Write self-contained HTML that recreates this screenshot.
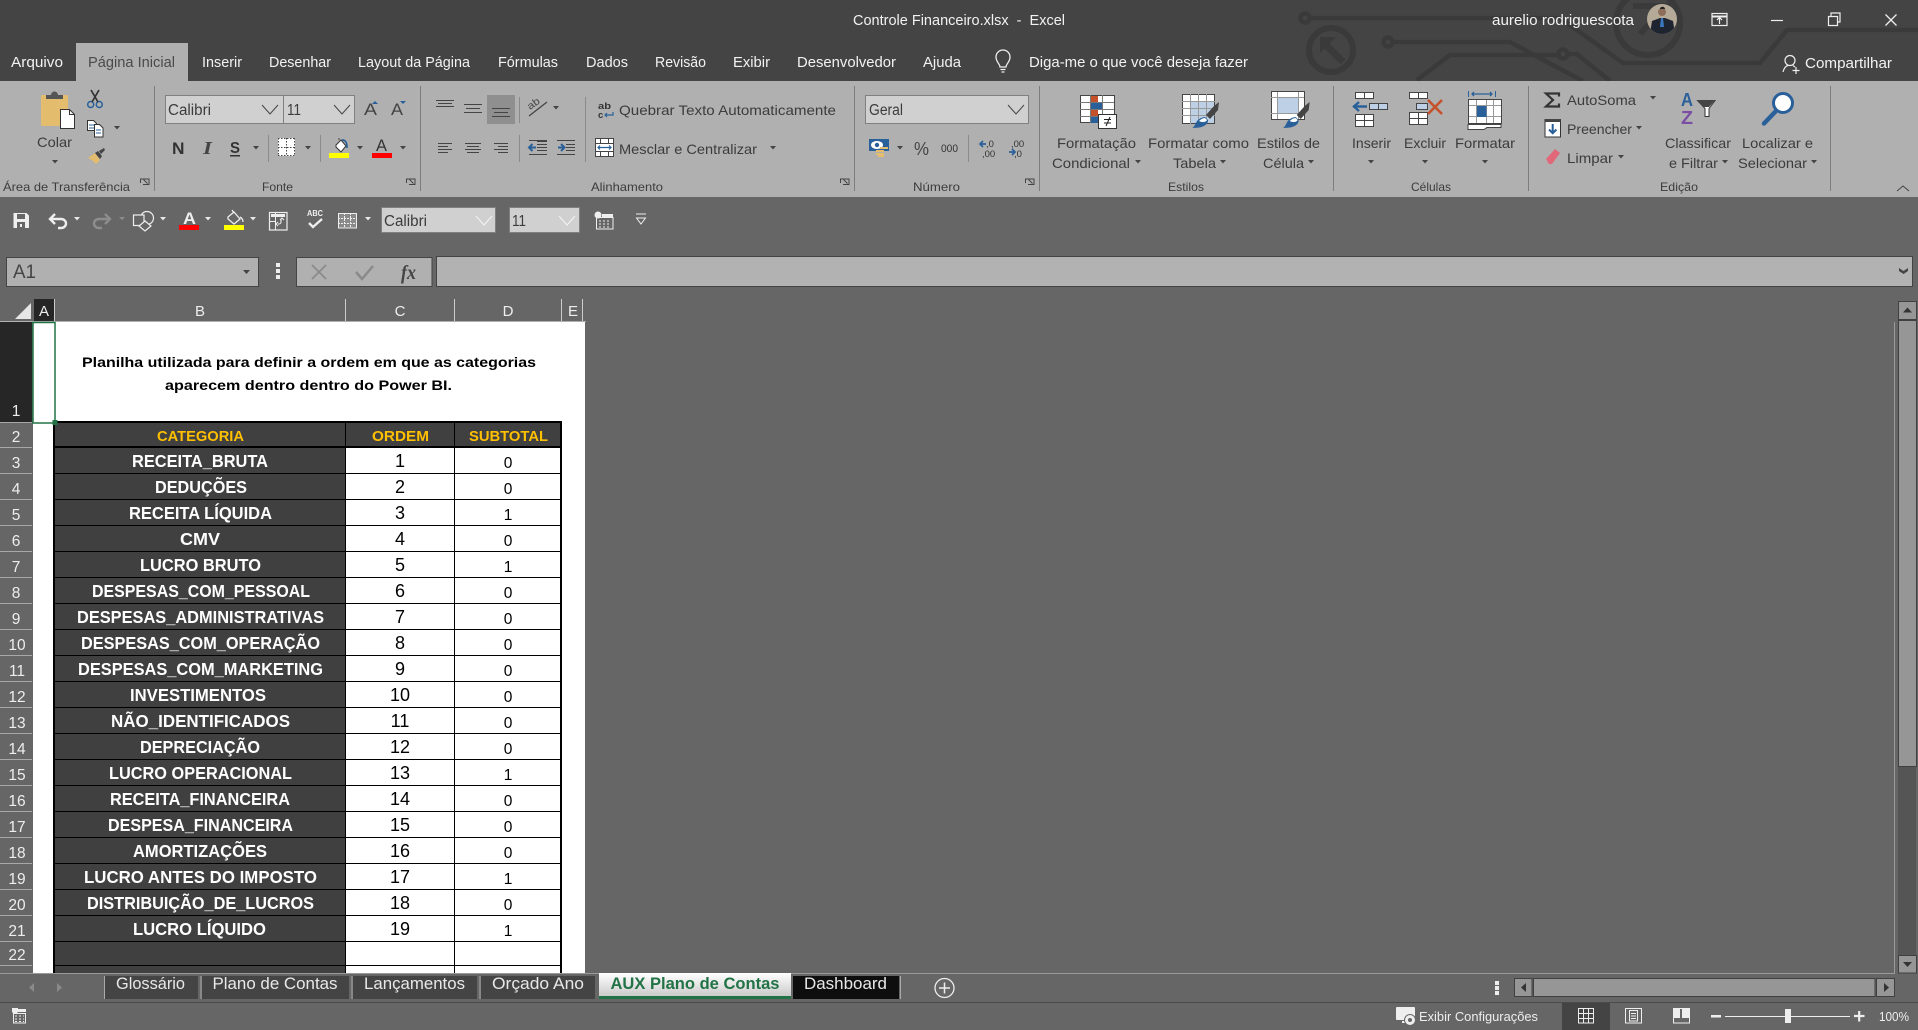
<!DOCTYPE html>
<html lang="pt"><head><meta charset="utf-8"><title>Controle Financeiro.xlsx - Excel</title>
<style>
html,body{margin:0;padding:0;background:#666;overflow:hidden}
svg{display:block}
text{font-family:"Liberation Sans",sans-serif}
text.sf{font-family:"Liberation Serif",serif}
.t{font-size:15px;fill:#f2f2f2}
.l{font-size:14px;fill:#3c3c3c}
.g{font-size:12px;fill:#3c3c3c}
.k{font-size:15.5px;fill:#3c3c3c}
.h{font-size:14.500px;font-weight:bold;fill:#ffc000}
.o{font-size:18px;fill:#000;text-anchor:middle}
.b{font-size:15.5px;fill:#000;text-anchor:middle}
.r{font-size:15.5px;fill:#eee;text-anchor:middle}
.ch{font-size:15px;fill:#eee;text-anchor:middle}
.s{font-size:17px;fill:#e8e8e8}
</style></head><body>
<svg xmlns="http://www.w3.org/2000/svg" width="1918" height="1030" viewBox="0 0 1918 1030">
<defs>
<path id="a" d="M0 0h6l-3 3.5z" fill="#444"/>
<path id="w" d="M0 0h6l-3 3.5z" fill="#e8e8e8"/>
<g id="br"><path d="M1219 102l-1 8-8 9-4-4 8-9z" fill="#444"/><path d="M1192 128c3-1 3-5 6-8 2-2 5-3 7-3l3 3c0 4-3 8-16 8z" fill="#2a6099"/><path d="M1199 121c2-2 4-3 6-3l2 2c-1 2-4 3-8 1z" fill="#fff"/></g>
</defs>
<rect width="1918" height="1030" fill="#666"/>
<!-- Title bar -->
<rect width="1918" height="81" fill="#444"/>
<g fill="none" stroke="#3a3a3a" stroke-width="4.5">
<circle cx="1305" cy="18" r="4.5"/><path d="M1310 18H1560L1623 63H1760L1787 30H1918"/>
<circle cx="1388" cy="42" r="4.5"/><path d="M1393 42H1510L1547 62L1583 81"/>
<path d="M1417 80L1450 55H1558"/><circle cx="1563" cy="54" r="4.5"/><path d="M1568 54H1577L1610 81"/>
<circle cx="1331" cy="50" r="22" stroke-width="6"/><circle cx="1648" cy="23" r="32" stroke-width="6"/>
<path d="M1343 62L1323 42" stroke-width="7"/><path d="M1633 6H1668V18M1664 8L1640 34" stroke-width="6"/>
</g>
<path d="M1320 37h16l-16 16z" fill="#3a3a3a"/>
<text class="t" x="853" y="25" textLength="212" lengthAdjust="spacingAndGlyphs" xml:space="preserve">Controle Financeiro.xlsx  -  Excel</text>
<text class="t" x="1492" y="25" textLength="142" lengthAdjust="spacingAndGlyphs">aurelio rodriguescota</text>
<clipPath id="av"><circle cx="1662" cy="19" r="15"/></clipPath>
<g clip-path="url(#av)"><rect x="1647" y="4" width="30" height="30" fill="#b5aa98"/><path d="M1650 34l2-13 8-3h5l8 3 2 13z" fill="#1f2530"/><circle cx="1662" cy="12" r="4" fill="#8d6e5a"/><path d="M1660 9c0-3 5-3 5 0z" fill="#222"/><path d="M1661 18h2l1 9h-4z" fill="#3a78c0"/></g>
<g fill="none" stroke="#eee" stroke-width="1.2">
<rect x="1712" y="13.5" width="15" height="12"/><path d="M1712 16.5h15" stroke-width="2"/><path d="M1719.5 24v-6M1717 20l2.5-2.5 2.5 2.5"/>
<path d="M1771 20.5h12"/>
<rect x="1828.5" y="16.5" width="9" height="9"/><path d="M1831 16v-3h9v9h-2.500"/>
<path d="M1885.500 14.500l11 11M1896.500 14.500l-11 11" stroke-width="1.300"/>
<circle cx="1790" cy="60.500" r="5"/><path d="M1783 72c1-4 3-6 5-6.500M1793 65.500l2 1.500M1796 67v7M1792.500 70.500h7"/>
</g>
<text class="t" x="1805" y="68" textLength="87" lengthAdjust="spacingAndGlyphs">Compartilhar</text>
<!-- Tabs -->
<rect x="76" y="43" width="112" height="39" fill="#b0b0b0"/>
<g class="t">
<text class="t" x="11" y="67" textLength="52" lengthAdjust="spacingAndGlyphs">Arquivo</text>
<text x="88" y="67" font-size="15" fill="#4a4a4a" textLength="87" lengthAdjust="spacingAndGlyphs">Página Inicial</text>
<text class="t" x="202" y="67" textLength="40" lengthAdjust="spacingAndGlyphs">Inserir</text>
<text class="t" x="269" y="67" textLength="62" lengthAdjust="spacingAndGlyphs">Desenhar</text>
<text class="t" x="358" y="67" textLength="112" lengthAdjust="spacingAndGlyphs">Layout da Página</text>
<text class="t" x="498" y="67" textLength="60" lengthAdjust="spacingAndGlyphs">Fórmulas</text>
<text class="t" x="586" y="67" textLength="42" lengthAdjust="spacingAndGlyphs">Dados</text>
<text class="t" x="655" y="67" textLength="51" lengthAdjust="spacingAndGlyphs">Revisão</text>
<text class="t" x="733" y="67" textLength="37" lengthAdjust="spacingAndGlyphs">Exibir</text>
<text class="t" x="797" y="67" textLength="99" lengthAdjust="spacingAndGlyphs">Desenvolvedor</text>
<text class="t" x="923" y="67" textLength="38" lengthAdjust="spacingAndGlyphs">Ajuda</text>
<text class="t" x="1029" y="67" textLength="219" lengthAdjust="spacingAndGlyphs">Diga-me o que você deseja fazer</text>
</g>
<path d="M1000 67c0-3-4-5-4-10a7 7 0 0 1 14 0c0 5-4 7-4 10zM1000.500 69.500h5M1001.500 72h3" fill="none" stroke="#eee" stroke-width="1.300"/>
<!-- Ribbon -->
<rect y="81" width="1918" height="116" fill="#b0b0b0"/>
<rect x="76" y="80" width="112" height="2" fill="#b0b0b0"/>
<path d="M154.500 86v105M420.500 86v105M854.500 86v105M1039.500 86v105M1333.500 86v105M1528.500 86v105M1830.500 86v105" stroke="#7d7d7d" stroke-width="1"/>
<text class="g" x="3" y="191" textLength="127" lengthAdjust="spacingAndGlyphs">Área de Transferência</text>
<text class="g" x="262" y="191" textLength="31" lengthAdjust="spacingAndGlyphs">Fonte</text>
<text class="g" x="591" y="191" textLength="72" lengthAdjust="spacingAndGlyphs">Alinhamento</text>
<text class="g" x="913" y="191" textLength="47" lengthAdjust="spacingAndGlyphs">Número</text>
<text class="g" x="1168" y="191" textLength="36" lengthAdjust="spacingAndGlyphs">Estilos</text>
<text class="g" x="1411" y="191" textLength="40" lengthAdjust="spacingAndGlyphs">Células</text>
<text class="g" x="1660" y="191" textLength="38" lengthAdjust="spacingAndGlyphs">Edição</text>
<g fill="none" stroke="#444" stroke-width="1"><path d="M140.500 183v-4h8.500M143 184.500h6v-6M143.500 179.500l4 4"/><path d="M406.500 183v-4h8.500M409 184.500h6v-6M409.500 179.500l4 4"/><path d="M840.500 183v-4h8.500M843 184.500h6v-6M843.500 179.500l4 4"/><path d="M1025.500 183v-4h8.500M1028 184.500h6v-6M1028.500 179.500l4 4"/><path d="M1897 191l6-5 6 5"/></g>
<!-- clipboard -->
<rect x="41" y="95" width="27" height="31" rx="1.500" fill="#e3bc6e"/>
<path d="M46 99v-4h5a3.500 3.500 0 0 1 7 0h5v4z" fill="#555"/>
<path d="M60.500 109.500h9l5 5v14h-14z" fill="#fff" stroke="#333"/><path d="M69.500 109.500v5h5" fill="none" stroke="#333"/>
<g fill="none"><circle cx="90.700" cy="104.500" r="3" stroke="#2a6099" stroke-width="1.500"/><circle cx="99.300" cy="104.500" r="3" stroke="#2a6099" stroke-width="1.500"/><path d="M92 102l7-12M98 102l-7-12" stroke="#333" stroke-width="1.700"/></g>
<path d="M87.500 120.500h6l3 3v7h-9z" fill="#fff" stroke="#333"/><path d="M94.500 124.500h5l3.500 3.500v9h-8.500z" fill="#fff" stroke="#333"/><path d="M89 125h5M89 128h5M96 130h5M96 133h5" stroke="#2a6099"/>
<use href="#a" x="114" y="126"/>
<path d="M88 158l7-5 5 7-4 4c-3-3-5-5-8-6z" fill="#e3bc6e"/><path d="M95 153l3-2 4 5-2 3z" fill="#444"/><path d="M99 151l5-3 1 2-4 4z" fill="#444"/>
<text class="l" x="37" y="147" textLength="35" lengthAdjust="spacingAndGlyphs">Colar</text>
<use href="#a" x="52" y="160"/>
<!-- font combos -->
<rect x="165.500" y="95.500" width="118" height="28" fill="#d0d0d0" stroke="#808080"/>
<rect x="283.500" y="95.500" width="71" height="28" fill="#d0d0d0" stroke="#808080"/>
<text class="k" x="168" y="115" textLength="43" lengthAdjust="spacingAndGlyphs">Calibri</text>
<text class="k" x="287" y="115" textLength="14" lengthAdjust="spacingAndGlyphs">11</text>
<path d="M262 105l8 9 8-9M334 105l8 9 8-9" fill="none" stroke="#444" stroke-width="1"/>
<text x="364" y="115" font-size="17" fill="#444" textLength="13" lengthAdjust="spacingAndGlyphs">A</text>
<path d="M372 104l3-3 3 3z" fill="#2a6099"/>
<text x="391" y="115" font-size="17" fill="#444" textLength="12" lengthAdjust="spacingAndGlyphs">A</text>
<path d="M400 101h6l-3 3z" fill="#2a6099"/>
<text x="172" y="154" font-size="17" font-weight="bold" fill="#333" textLength="12.500" lengthAdjust="spacingAndGlyphs">N</text>
<text class="sf" x="203" y="154" font-size="18" font-weight="bold" font-style="italic" fill="#444" textLength="9" lengthAdjust="spacingAndGlyphs">I</text>
<text x="230" y="153" font-size="16" font-weight="bold" fill="#333" textLength="10" lengthAdjust="spacingAndGlyphs">S</text>
<rect x="230" y="155" width="10" height="1.500" fill="#333"/>
<use href="#a" x="253" y="146"/>
<path d="M268.500 135v27M320.500 135v27M519.500 97v26M519.500 135v27M585.500 97v65M968.500 135v27" stroke="#8a8a8a"/>
<rect x="278" y="138" width="17" height="18" fill="#fff"/>
<path d="M278.500 138v18M286.500 138v18M294.500 138v18M278 138.500h17M278 147.500h17M278 155.500h17" stroke="#444" stroke-dasharray="1.500 1.500"/>
<use href="#a" x="305" y="146"/>
<path d="M336 145l5-5 5 6-5 6-5-5z" fill="#fff" stroke="#333"/><path d="M342 140c4 0 5 3 5 8" fill="none" stroke="#2a6099" stroke-width="1.700"/><path d="M339 140v-2" stroke="#444"/>
<rect x="329" y="153" width="20" height="5" fill="#ff0"/>
<use href="#a" x="357" y="146"/>
<text x="376" y="151" font-size="17" fill="#333" textLength="11" lengthAdjust="spacingAndGlyphs">A</text>
<rect x="372" y="153" width="20" height="5" fill="#f00"/>
<use href="#a" x="400" y="146"/>
<!-- align -->
<rect x="487" y="95" width="28" height="29" fill="#8f8f8f"/>
<g stroke="#444" stroke-width="1.100">
<path d="M436 100.500h18M438 103.500h14M436 106.500h18"/>
<path d="M464 104.500h18M466 108.500h14M464 112.500h18"/>
<path d="M492 108.500h18M494 112.500h14M492 116.500h18"/>
<path d="M438 143.500h14M438 146.500h10M438 149.500h14M438 152.500h10"/>
<path d="M465 143.500h16M467 146.500h12M465 149.500h16M467 152.500h12"/>
<path d="M494 143.500h14M498 146.500h10M494 149.500h14M498 152.500h10"/>
<path d="M537 141.500h10M537 144.500h10M537 147.500h10M537 150.500h10M529 154.500h18M529 140.500h18"/>
<path d="M557 140.500h18M566 144.500h9M566 147.500h9M566 150.500h9M557 154.500h18"/>
<path d="M529 116l18-14" stroke-width="1.300"/>
</g>
<path d="M529 147.500h7M532.500 144l-3.500 3.500 3.500 3.500M558 147.500h6M561 144l3.500 3.500-3.500 3.500" fill="none" stroke="#2a6099" stroke-width="2"/>
<text x="530" y="110" font-size="10" fill="#444" transform="rotate(-35 530 110)" textLength="13" lengthAdjust="spacingAndGlyphs">ab</text>
<use href="#a" x="553" y="106"/>
<text x="598" y="109" font-size="9.500" font-weight="bold" fill="#333" textLength="13" lengthAdjust="spacingAndGlyphs">ab</text>
<text x="598" y="118" font-size="9.500" font-weight="bold" fill="#333">c</text>
<path d="M613 112v3h-8M607 113l-2 2 2 2" fill="none" stroke="#2a6099" stroke-width="1.200"/>
<text class="l" x="619" y="115" textLength="217" lengthAdjust="spacingAndGlyphs">Quebrar Texto Automaticamente</text>
<rect x="595.500" y="138.500" width="18" height="18" fill="#fff" stroke="#444"/><path d="M596 143.500h17M596 151.500h17M600.500 139v4M608.500 139v4M600.500 152v4M608.500 152v4" stroke="#444"/><path d="M598 147.500h13M600 145.500l-2 2 2 2M609 145.500l2 2-2 2" fill="none" stroke="#2a6099" stroke-width="1.200"/>
<text class="l" x="619" y="154" textLength="138" lengthAdjust="spacingAndGlyphs">Mesclar e Centralizar</text>
<use href="#a" x="770" y="146"/>
<!-- number -->
<rect x="865.500" y="95.500" width="163" height="28" fill="#d0d0d0" stroke="#808080"/>
<text class="k" x="869" y="115" textLength="34" lengthAdjust="spacingAndGlyphs">Geral</text>
<path d="M1008 105l8 9 8-9" fill="none" stroke="#444"/>
<rect x="869" y="139" width="20" height="12" fill="#2a6099"/><ellipse cx="877" cy="145" rx="6" ry="4" fill="#fff"/><circle cx="877" cy="145" r="2.200" fill="#2a6099"/>
<path d="M876 150h8v2h-8zM876 153h8v2h-8zM880 147h8v2h-8zM878 155h6v2h-6z" fill="#e3bc6e"/>
<use href="#a" x="897" y="146"/>
<text x="914" y="155" font-size="18" fill="#444" textLength="15" lengthAdjust="spacingAndGlyphs">%</text>
<text x="941" y="152" font-size="11" fill="#333" textLength="17" lengthAdjust="spacingAndGlyphs">000</text>
<g font-size="9.500" fill="#333"><text x="986" y="147">,0</text><text x="982" y="157">,00</text><text x="1011" y="147">,00</text><text x="1014" y="157">,0</text></g>
<path d="M986 144h-6M983 141l-3 3 3 3M1009 152h6M1012 149l3 3-3 3" fill="none" stroke="#2a6099" stroke-width="1.700"/>
<!-- styles icons -->
<g>
<rect x="1080.500" y="95.500" width="34" height="27" fill="#fff" stroke="#444"/>
<path d="M1090.500 95v28M1102.500 95v28M1080 102.500h34M1080 109.500h34M1080 116.500h34" stroke="#777"/>
<rect x="1091" y="96" width="7" height="6" fill="#c5512b"/><rect x="1091" y="103" width="11" height="6" fill="#2a6099"/><rect x="1091" y="110" width="7" height="6" fill="#c5512b"/><rect x="1091" y="117" width="7" height="6" fill="#2a6099"/>
<rect x="1098.500" y="114.500" width="18" height="14" fill="#fff" stroke="#333"/><path d="M1104 119.500h7M1104 123h7M1110 117l-4 9" stroke="#222" fill="none"/>
</g>
<g>
<rect x="1182.500" y="94.500" width="32" height="29" fill="#fff" stroke="#444"/>
<rect x="1190" y="102" width="24" height="21" fill="#bdd0e6"/>
<path d="M1190.500 94v30M1198.500 94v30M1206.500 94v30M1182 101.500h33M1182 108.500h33M1182 115.500h33" stroke="#999"/>
<use href="#br"/>
</g>
<g>
<rect x="1271.500" y="91.500" width="33" height="28" fill="#fff" stroke="#444"/>
<rect x="1278" y="98" width="20" height="15" fill="#bdd0e6"/>
<path d="M1277.500 92v27M1298.500 92v27M1271 97.500h33M1271 113.500h33" stroke="#999"/>
<use href="#br" x="90.700"/>
</g>
<g class="l">
<text class="l" x="1057" y="148" textLength="79" lengthAdjust="spacingAndGlyphs">Formatação</text>
<text class="l" x="1052" y="168" textLength="78" lengthAdjust="spacingAndGlyphs">Condicional</text>
<text class="l" x="1148" y="148" textLength="101" lengthAdjust="spacingAndGlyphs">Formatar como</text>
<text class="l" x="1173" y="168" textLength="43" lengthAdjust="spacingAndGlyphs">Tabela</text>
<text class="l" x="1257" y="148" textLength="63" lengthAdjust="spacingAndGlyphs">Estilos de</text>
<text class="l" x="1263" y="168" textLength="41" lengthAdjust="spacingAndGlyphs">Célula</text>
<text class="l" x="1352" y="148" textLength="39" lengthAdjust="spacingAndGlyphs">Inserir</text>
<text class="l" x="1404" y="148" textLength="42" lengthAdjust="spacingAndGlyphs">Excluir</text>
<text class="l" x="1455" y="148" textLength="60" lengthAdjust="spacingAndGlyphs">Formatar</text>
<text class="l" x="1567" y="105" textLength="69" lengthAdjust="spacingAndGlyphs">AutoSoma</text>
<text class="l" x="1567" y="134" textLength="65" lengthAdjust="spacingAndGlyphs">Preencher</text>
<text class="l" x="1567" y="163" textLength="46" lengthAdjust="spacingAndGlyphs">Limpar</text>
<text class="l" x="1665" y="148" textLength="66" lengthAdjust="spacingAndGlyphs">Classificar</text>
<text class="l" x="1669" y="168" textLength="49" lengthAdjust="spacingAndGlyphs">e Filtrar</text>
<text class="l" x="1742" y="148" textLength="71" lengthAdjust="spacingAndGlyphs">Localizar e</text>
<text class="l" x="1738" y="168" textLength="69" lengthAdjust="spacingAndGlyphs">Selecionar</text>
</g>
<use href="#a" x="1135" y="160"/><use href="#a" x="1220" y="160"/><use href="#a" x="1308" y="160"/><use href="#a" x="1368" y="160"/><use href="#a" x="1422" y="160"/><use href="#a" x="1482" y="160"/><use href="#a" x="1650" y="96"/><use href="#a" x="1636" y="126"/><use href="#a" x="1618" y="155"/><use href="#a" x="1722" y="160"/><use href="#a" x="1811" y="160"/>
<!-- cells icons -->
<g fill="#fff" stroke="#444">
<rect x="1355.500" y="92.500" width="18" height="6"/><path d="M1364.500 92v7"/>
<rect x="1369.500" y="103.500" width="18" height="6" fill="#bdd0e6"/><path d="M1378.500 103v7"/>
<rect x="1355.500" y="114.500" width="18" height="12"/><path d="M1364.500 114v13M1355 120.500h19"/>
<rect x="1409.500" y="92.500" width="18" height="6"/><path d="M1418.500 92v7"/>
<rect x="1416.500" y="103.500" width="11" height="6" fill="#bdd0e6"/>
<rect x="1409.500" y="112.500" width="18" height="12"/><path d="M1418.500 112v13M1409 118.500h19"/>
<path d="M1468 124.500h33v3h-14l-3 2h-16z" fill="#fff"/>
<rect x="1468.500" y="99.500" width="33" height="24"/><path d="M1476.500 99v25M1486.500 99v25M1493.500 99v25M1468 105.500h33M1468 116.500h33" stroke="#999"/>
</g>
<rect x="1468.500" y="99.500" width="33" height="24" fill="none" stroke="#444"/>
<rect x="1477" y="106" width="9.500" height="11" fill="#2a6099"/>
<path d="M1353 106.500h14M1359 102l-5 4.500 5 4.500" fill="none" stroke="#2a6099" stroke-width="2.400"/>
<path d="M1428 100l14 14M1442 100l-14 14" stroke="#c5512b" stroke-width="2.600"/>
<path d="M1468.500 91v6M1495.500 91v6" stroke="#2a6099"/><path d="M1472 94h20M1474 92l-2 2 2 2M1490 92l2 2-2 2" fill="none" stroke="#2a6099" stroke-width="1.300"/>
<!-- editing icons -->
<path d="M1559 96.500v-3h-13l7 6.500-7 6.500h13v-3" fill="none" stroke="#333" stroke-width="2.200"/>
<rect x="1545" y="119.500" width="15.500" height="17.500" fill="#fff" stroke="#333"/><rect x="1545" y="119" width="15.500" height="3" fill="#444"/><path d="M1552.700 124v9M1549 129.500l3.700 3.700 3.700-3.700" fill="none" stroke="#2a6099" stroke-width="2"/>
<path d="M1546 159l9-10 5 4-8 11h-3z" fill="#e06878"/>
<text x="1681" y="106" font-size="18" font-weight="bold" fill="#2a6099" textLength="12" lengthAdjust="spacingAndGlyphs">A</text>
<text x="1681" y="124" font-size="18" font-weight="bold" fill="#7a4fa3" textLength="12" lengthAdjust="spacingAndGlyphs">Z</text>
<path d="M1697.500 100.500h17.500l-6 8v8h-4v-8z" fill="#fff" stroke="#333"/><path d="M1697 100h18l-6 7h-6z" fill="#444"/>
<circle cx="1783" cy="103" r="9.500" fill="#fff" stroke="#2a6099" stroke-width="3"/><path d="M1776 111l-12 12.500" stroke="#2a6099" stroke-width="4.500" stroke-linecap="round"/>
<!-- QAT -->
<path d="M13.500 213h13l2.500 2.500v12.500h-15.500z" fill="#eee"/><rect x="17" y="214" width="8" height="5" fill="#666"/><rect x="17" y="222" width="8" height="6" fill="#666"/><rect x="20" y="224" width="2" height="3" fill="#eee"/>
<path d="M55 214l-5 5 5 5" fill="none" stroke="#eee" stroke-width="2.400"/><path d="M50 219h11a5 4.500 0 0 1 0 9h-3" fill="none" stroke="#eee" stroke-width="2.400"/>
<use href="#w" x="74" y="217"/>
<path d="M105 214l5 5-5 5" fill="none" stroke="#8d8d8d" stroke-width="2.400"/><path d="M110 219h-11a5 4.500 0 0 0 0 9h3" fill="none" stroke="#8d8d8d" stroke-width="2.400"/>
<path d="M119 217h6l-3 3z" fill="#8d8d8d"/>
<g fill="none" stroke="#eee" stroke-width="1.200"><circle cx="147" cy="218" r="6.500"/><rect x="133.500" y="215" width="10.500" height="10.500" fill="#666"/><path d="M145 221l6 5-6 5-6-5z" fill="#666"/></g>
<use href="#w" x="160" y="217"/>
<text x="183" y="224" font-size="17" font-weight="bold" fill="#eee" textLength="13" lengthAdjust="spacingAndGlyphs">A</text>
<rect x="179" y="225" width="20" height="5" fill="#f00"/><use href="#w" x="205" y="217"/>
<path d="M228 217l6-5 6 7-6 5-6-5z" fill="#666" stroke="#eee" stroke-width="1.300"/><path d="M234 213l-2-3M240 217c2 1 3 3 3 5" fill="none" stroke="#eee" stroke-width="1.300"/>
<rect x="224" y="225" width="20" height="5" fill="#ff0"/><use href="#w" x="250" y="217"/>
<rect x="269.500" y="212.500" width="17.500" height="17.500" fill="none" stroke="#eee" stroke-width="1.200"/><rect x="271" y="214" width="14" height="3" fill="#eee"/><path d="M275.500 213v17M270 221.500h6" stroke="#eee"/><path d="M281 219v3a2 2 0 0 1-2 2h-1M278 222l-2 2 2 2M284 220l-2-2-2 2" fill="none" stroke="#eee" stroke-width="1.100"/>
<text x="307" y="216" font-size="8" font-weight="bold" fill="#eee" textLength="16" lengthAdjust="spacingAndGlyphs">ABC</text>
<path d="M309 223l4 4 9-8" fill="none" stroke="#eee" stroke-width="2.400"/>
<rect x="338.500" y="213.500" width="18" height="14.500" fill="#8a8a8a" stroke="#eee"/><path d="M338 218.500h19M338 223.500h19M344.500 213v15M350.500 213v15" stroke="#eee" stroke-dasharray="2 1"/>
<use href="#w" x="365" y="217"/>
<rect x="381.500" y="207.500" width="114" height="25" fill="#d0d0d0" stroke="#808080"/>
<rect x="509.500" y="207.500" width="70" height="25" fill="#d0d0d0" stroke="#808080"/>
<text class="k" x="384" y="226" textLength="43" lengthAdjust="spacingAndGlyphs">Calibri</text>
<text class="k" x="512" y="226" textLength="14" lengthAdjust="spacingAndGlyphs">11</text>
<path d="M476 216l8 9 8-9M559 216l8 9 8-9" fill="none" stroke="#f2f2f2" stroke-width="1.100"/>
<circle cx="598" cy="215" r="3.500" fill="#eee"/><rect x="596.500" y="217.500" width="16.500" height="11.500" fill="none" stroke="#eee"/><rect x="602" y="214" width="11" height="3" fill="#eee"/><path d="M599 221h2M603 221h2M607 221h2M599 224h2M603 224h2M607 224h2M599 227h2M603 227h2M607 227h2" stroke="#eee"/>
<path d="M636 214h10M636.500 218h9l-4.500 6z" fill="none" stroke="#eee"/>
<!-- formula bar -->
<rect x="6.500" y="257.500" width="252" height="29" fill="#b0b0b0" stroke="#444"/>
<text x="13" y="278" font-size="19" fill="#444" textLength="23" lengthAdjust="spacingAndGlyphs">A1</text>
<path d="M243 270h7l-3.500 4z" fill="#444"/>
<path d="M276 263h4v4h-4zM276 269h4v4h-4zM276 275h4v4h-4z" fill="#eee"/>
<rect x="296.500" y="257.500" width="135.500" height="29" fill="#b0b0b0" stroke="#444"/>
<path d="M312 265l14 14M326 265l-14 14" stroke="#8a8a8a" stroke-width="1.800"/><path d="M356 272l6 7 11-13" fill="none" stroke="#8a8a8a" stroke-width="2.500"/>
<text class="sf" x="401" y="279" font-size="20" font-style="italic" font-weight="bold" fill="#444" textLength="15" lengthAdjust="spacingAndGlyphs">fx</text>
<rect x="436.500" y="256.500" width="1476" height="30" fill="#b2b2b2" stroke="#444"/>
<path d="M1899 268l4.500 3 4.500-3v3l-4.500 3-4.500-3z" fill="#444"/>
<!-- headers -->
<rect x="34" y="299" width="20" height="23" fill="#262626"/>
<path d="M54.500 299v23M345.500 299v23M454.500 299v23M561.500 299v23M582.500 299v23" stroke="#ccc"/>
<path d="M31 303v16H15z" fill="#e6e6e6"/>
<text class="ch" x="44" y="316">A</text><text class="ch" x="200" y="316">B</text><text class="ch" x="400" y="316">C</text><text class="ch" x="508" y="316">D</text><text class="ch" x="573" y="316">E</text>
<rect y="321" width="586" height="1" fill="#b0b0b0"/>
<!-- sheet -->
<rect x="33" y="322" width="552" height="651" fill="#fff"/>
<rect y="322" width="32" height="100" fill="#262626"/>
<path d="M0 422.500h32M0 447.500h32M0 473.500h32M0 499.500h32M0 525.500h32M0 551.500h32M0 577.500h32M0 603.500h32M0 629.500h32M0 655.500h32M0 681.500h32M0 707.500h32M0 733.500h32M0 759.500h32M0 785.500h32M0 811.500h32M0 837.500h32M0 863.500h32M0 889.500h32M0 915.500h32M0 941.500h32M0 965.500h32" stroke="#a8a8a8"/>
<g>
<text class="r" x="16" y="416">1</text><text class="r" x="16" y="442">2</text><text class="r" x="16" y="468">3</text><text class="r" x="16" y="494">4</text><text class="r" x="16" y="520">5</text><text class="r" x="16" y="546">6</text><text class="r" x="16" y="572">7</text><text class="r" x="16" y="598">8</text><text class="r" x="16" y="624">9</text><text class="r" x="17" y="650">10</text><text class="r" x="17" y="676">11</text><text class="r" x="17" y="702">12</text><text class="r" x="17" y="728">13</text><text class="r" x="17" y="754">14</text><text class="r" x="17" y="780">15</text><text class="r" x="17" y="806">16</text><text class="r" x="17" y="832">17</text><text class="r" x="17" y="858">18</text><text class="r" x="17" y="884">19</text><text class="r" x="17" y="910">20</text><text class="r" x="17" y="936">21</text><text class="r" x="17" y="960">22</text>
</g>
<text x="82" y="367" font-size="14" font-weight="bold" fill="#000" textLength="454" lengthAdjust="spacingAndGlyphs">Planilha utilizada para definir a ordem em que as categorias</text>
<text x="165" y="390" font-size="14" font-weight="bold" fill="#000" textLength="287" lengthAdjust="spacingAndGlyphs">aparecem dentro dentro do Power BI.</text>
<!-- table -->
<rect x="54" y="422" width="291" height="551" fill="#404040"/>
<rect x="54" y="422" width="507" height="25" fill="#404040"/>
<path d="M54 473.500h507M54 499.500h507M54 525.500h507M54 551.500h507M54 577.500h507M54 603.500h507M54 629.500h507M54 655.500h507M54 681.500h507M54 707.500h507M54 733.500h507M54 759.500h507M54 785.500h507M54 811.500h507M54 837.500h507M54 863.500h507M54 889.500h507M54 915.500h507M54 941.500h507M54 965.500h507M345.500 422v551M454.500 422v551" stroke="#000"/>
<rect x="53" y="421" width="509" height="2" fill="#000"/><rect x="53" y="421" width="2" height="552" fill="#000"/><rect x="560" y="421" width="2" height="552" fill="#000"/><rect x="54" y="446" width="507" height="2" fill="#000"/>
<text class="h" x="157" y="441" textLength="87" lengthAdjust="spacingAndGlyphs">CATEGORIA</text>
<text class="h" x="372" y="441" textLength="57" lengthAdjust="spacingAndGlyphs">ORDEM</text>
<text class="h" x="469" y="441" textLength="79" lengthAdjust="spacingAndGlyphs">SUBTOTAL</text>
<g font-size="17.5" font-weight="bold" fill="#fff">
<text x="132" y="467" textLength="136" lengthAdjust="spacingAndGlyphs">RECEITA_BRUTA</text>
<text x="155" y="493" textLength="92" lengthAdjust="spacingAndGlyphs">DEDUÇÕES</text>
<text x="129" y="519" textLength="143" lengthAdjust="spacingAndGlyphs">RECEITA LÍQUIDA</text>
<text x="180" y="545" textLength="40" lengthAdjust="spacingAndGlyphs">CMV</text>
<text x="140" y="571" textLength="121" lengthAdjust="spacingAndGlyphs">LUCRO BRUTO</text>
<text x="92" y="597" textLength="218" lengthAdjust="spacingAndGlyphs">DESPESAS_COM_PESSOAL</text>
<text x="77" y="623" textLength="247" lengthAdjust="spacingAndGlyphs">DESPESAS_ADMINISTRATIVAS</text>
<text x="81" y="649" textLength="239" lengthAdjust="spacingAndGlyphs">DESPESAS_COM_OPERAÇÃO</text>
<text x="78" y="675" textLength="245" lengthAdjust="spacingAndGlyphs">DESPESAS_COM_MARKETING</text>
<text x="130" y="701" textLength="136" lengthAdjust="spacingAndGlyphs">INVESTIMENTOS</text>
<text x="111" y="727" textLength="179" lengthAdjust="spacingAndGlyphs">NÃO_IDENTIFICADOS</text>
<text x="140" y="753" textLength="120" lengthAdjust="spacingAndGlyphs">DEPRECIAÇÃO</text>
<text x="109" y="779" textLength="183" lengthAdjust="spacingAndGlyphs">LUCRO OPERACIONAL</text>
<text x="110" y="805" textLength="180" lengthAdjust="spacingAndGlyphs">RECEITA_FINANCEIRA</text>
<text x="108" y="831" textLength="185" lengthAdjust="spacingAndGlyphs">DESPESA_FINANCEIRA</text>
<text x="133" y="857" textLength="134" lengthAdjust="spacingAndGlyphs">AMORTIZAÇÕES</text>
<text x="84" y="883" textLength="233" lengthAdjust="spacingAndGlyphs">LUCRO ANTES DO IMPOSTO</text>
<text x="87" y="909" textLength="227" lengthAdjust="spacingAndGlyphs">DISTRIBUIÇÃO_DE_LUCROS</text>
<text x="133" y="935" textLength="133" lengthAdjust="spacingAndGlyphs">LUCRO LÍQUIDO</text>
</g>
<g>
<text class="o" x="400" y="467">1</text><text class="o" x="400" y="493">2</text><text class="o" x="400" y="519">3</text><text class="o" x="400" y="545">4</text><text class="o" x="400" y="571">5</text><text class="o" x="400" y="597">6</text><text class="o" x="400" y="623">7</text><text class="o" x="400" y="649">8</text><text class="o" x="400" y="675">9</text><text class="o" x="400" y="701">10</text><text class="o" x="400" y="727">11</text><text class="o" x="400" y="753">12</text><text class="o" x="400" y="779">13</text><text class="o" x="400" y="805">14</text><text class="o" x="400" y="831">15</text><text class="o" x="400" y="857">16</text><text class="o" x="400" y="883">17</text><text class="o" x="400" y="909">18</text><text class="o" x="400" y="935">19</text>
</g>
<g>
<text class="b" x="508" y="468">0</text><text class="b" x="508" y="494">0</text><text class="b" x="508" y="520">1</text><text class="b" x="508" y="546">0</text><text class="b" x="508" y="572">1</text><text class="b" x="508" y="598">0</text><text class="b" x="508" y="624">0</text><text class="b" x="508" y="650">0</text><text class="b" x="508" y="676">0</text><text class="b" x="508" y="702">0</text><text class="b" x="508" y="728">0</text><text class="b" x="508" y="754">0</text><text class="b" x="508" y="780">1</text><text class="b" x="508" y="806">0</text><text class="b" x="508" y="832">0</text><text class="b" x="508" y="858">0</text><text class="b" x="508" y="884">1</text><text class="b" x="508" y="910">0</text><text class="b" x="508" y="936">1</text>
</g>
<!-- selection -->
<rect x="33" y="322.500" width="22" height="100.500" fill="none" stroke="#217346" stroke-width="1.500"/>
<rect x="52.500" y="420" width="5" height="5" fill="#217346"/>
<!-- vertical scrollbar -->
<rect x="1898" y="301" width="18" height="672" fill="#555"/>
<rect x="1898.500" y="301.500" width="18" height="18" fill="#969696" stroke="#404040"/>
<path d="M1903 312.500l4.500-5 4.500 5z" fill="#333"/>
<rect x="1898.500" y="320.500" width="18" height="446" fill="#969696" stroke="#404040"/>
<rect x="1898.500" y="955.500" width="18" height="17.500" fill="#969696" stroke="#404040"/>
<path d="M1903 962l4.500 5 4.500-5z" fill="#333"/>
<path d="M1894.500 322v651M0 973.500h1895" stroke="#9a9a9a"/>
<!-- sheet tabs -->
<path d="M34 983v9l-5-4.500zM57 983v9l5-4.500z" fill="#8a8a8a"/>
<rect x="105" y="976" width="93" height="23" fill="#444"/><rect x="202" y="976" width="147" height="23" fill="#444"/><rect x="353" y="976" width="124" height="23" fill="#444"/><rect x="481" y="976" width="114" height="23" fill="#444"/>
<path d="M104.500 976v23M201 976v23M352 976v23M480 976v23" stroke="#aaa"/>
<defs><linearGradient id="tg" x1="0" y1="0" x2="0" y2="1"><stop offset="0" stop-color="#fff"/><stop offset="1" stop-color="#c8c8c8"/></linearGradient></defs>
<rect x="599" y="973" width="192" height="24" fill="url(#tg)"/><rect x="599" y="996" width="192" height="3" fill="#217346"/>
<rect x="793" y="976" width="106" height="23" fill="#0e0e0e"/><path d="M900.500 976v23" stroke="#aaa"/>
<text class="s" x="116" y="989" textLength="69" lengthAdjust="spacingAndGlyphs">Glossário</text>
<text class="s" x="212.500" y="989" textLength="125" lengthAdjust="spacingAndGlyphs">Plano de Contas</text>
<text class="s" x="364" y="989" textLength="101" lengthAdjust="spacingAndGlyphs">Lançamentos</text>
<text class="s" x="492" y="989" textLength="92" lengthAdjust="spacingAndGlyphs">Orçado Ano</text>
<text x="610.500" y="989" font-size="17" font-weight="bold" fill="#217346" textLength="169" lengthAdjust="spacingAndGlyphs">AUX Plano de Contas</text>
<text class="s" x="804" y="989" textLength="83" lengthAdjust="spacingAndGlyphs">Dashboard</text>
<circle cx="944.500" cy="988" r="9.500" fill="none" stroke="#eee" stroke-width="1.300"/><path d="M939 988h11M944.500 982.500v11" stroke="#eee" stroke-width="1.500"/>
<!-- horizontal scrollbar -->
<path d="M1495 981h4v4h-4zM1495 986h4v4h-4zM1495 991h4v4h-4z" fill="#eee"/>
<rect x="1514.500" y="978.500" width="17.500" height="18" fill="#969696" stroke="#404040"/>
<path d="M1526 983v9l-5-4.500z" fill="#333"/>
<rect x="1533.500" y="978.500" width="341.500" height="18" fill="#969696" stroke="#404040"/>
<rect x="1876.500" y="978.500" width="18" height="18" fill="#969696" stroke="#404040"/>
<path d="M1884 983v9l5-4.500z" fill="#333"/>
<!-- status bar -->
<path d="M0 1002.500h1918" stroke="#4a4a4a"/>
<rect x="12" y="1008" width="6" height="4" fill="#eee"/><circle cx="15" cy="1011" r="3" fill="#eee"/><rect x="18" y="1009" width="8" height="3" fill="#eee"/><rect x="13.500" y="1013.500" width="12" height="9.500" fill="none" stroke="#eee"/><path d="M15 1016h2M19 1016h2M23 1016h1M15 1019h2M19 1019h2M23 1019h1M15 1021.500h2M19 1021.500h2M23 1021.500h1" stroke="#eee"/>
<rect x="1396" y="1007" width="19" height="13" rx="1" fill="#eee"/><rect x="1402" y="1021" width="8" height="2" fill="#eee"/><circle cx="1410" cy="1020" r="5.500" fill="#eee" stroke="#666"/><circle cx="1410" cy="1020" r="2" fill="#666"/>
<text x="1419" y="1021" font-size="13" fill="#eee" textLength="119" lengthAdjust="spacingAndGlyphs">Exibir Configurações</text>
<rect x="1562" y="1003" width="48" height="27" fill="#444"/>
<g fill="none" stroke="#eee"><rect x="1578.500" y="1008.500" width="15" height="14.500"/><path d="M1583.500 1008v15M1588.500 1008v15M1578 1013.500h16M1578 1018.500h16"/>
<rect x="1625.500" y="1008.500" width="16" height="14.500"/><rect x="1629.500" y="1010.500" width="8" height="10.500"/><path d="M1631 1013.500h5M1631 1016h5M1631 1018.500h5"/>
<rect x="1673.500" y="1008.500" width="16" height="14.500"/></g>
<path d="M1674 1009h6v9h-6zM1682 1009h7v9h-7z" fill="#eee"/>
<rect x="1711" y="1015" width="10" height="2.500" fill="#eee"/><rect x="1725" y="1016" width="125" height="1" fill="#eee"/><rect x="1785" y="1009" width="6" height="14" fill="#eee"/>
<path d="M1854 1016h10.500M1859.200 1011v10.500" stroke="#eee" stroke-width="2.200"/>
<text x="1879" y="1021" font-size="13" fill="#eee" textLength="30" lengthAdjust="spacingAndGlyphs">100%</text>
</svg>
</body></html>
